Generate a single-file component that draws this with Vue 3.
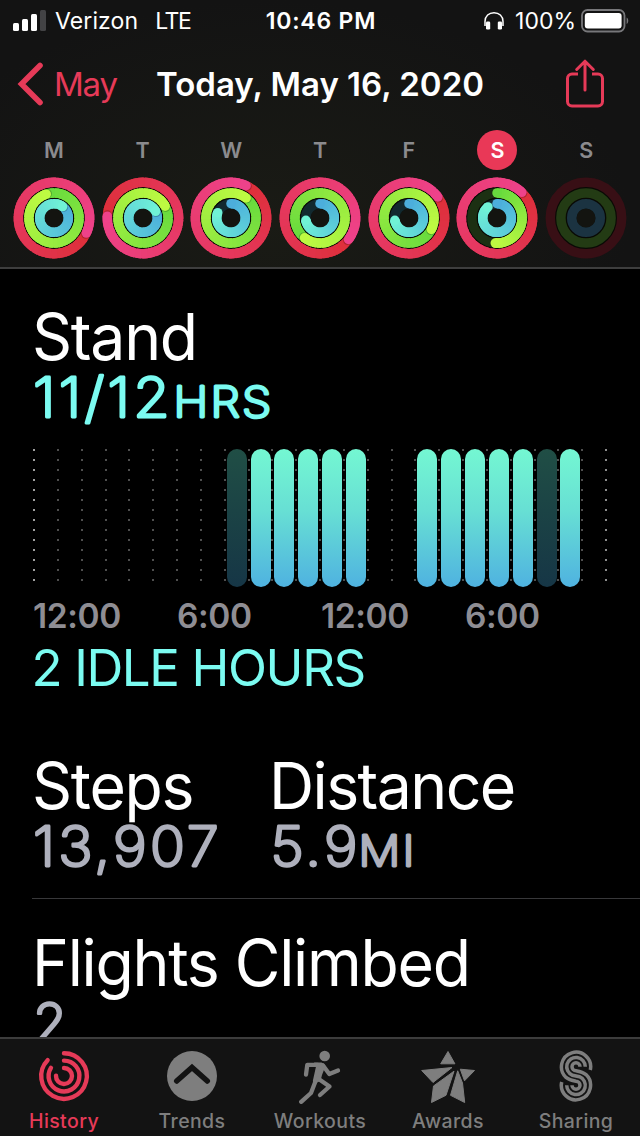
<template>
  <div class="screen">
    <header class="header">
      <div class="status">
        <div class="carrier">
          <div class="signal">
            <i v-for="n in 4" :key="n" :class="['bar', 'bar-' + n]"></i>
          </div>
          <span class="carrier-name">Verizon</span>
          <span class="network">LTE</span>
        </div>
        <div class="clock">10:46 PM</div>
        <div class="power">
          <svg class="headphones" width="22" height="20" viewBox="0 0 22 20">
            <path
              d="M2 15V10.500C2 5 6 1.700 11 1.700S20 5 20 10.500V15"
              fill="none"
              stroke="#fff"
              stroke-width="1.500"
            />
            <rect x="3" y="10.500" width="4.200" height="8" rx="1.300" fill="#fff" />
            <rect x="14.800" y="10.500" width="4.200" height="8" rx="1.300" fill="#fff" />
          </svg>
          <span class="percent">100%</span>
          <svg class="battery" width="48" height="24" viewBox="0 0 48 24">
            <rect x="1" y="1" width="42.500" height="21.500" rx="5.500" fill="none" stroke="#77777a" stroke-width="1.800" />
            <rect x="3.800" y="3.900" width="36.800" height="15.700" rx="3" fill="#fff" />
            <path d="M45.600 8.500c2.200 1 2.200 5.500 0 6.500z" fill="#77777a" />
          </svg>
        </div>
      </div>

      <div class="nav">
        <div class="back">
          <svg width="28" height="46" viewBox="0 0 28 46">
            <path
              d="M23 4.500L4.500 23L23 41.500"
              fill="none"
              stroke="#e63a58"
              stroke-width="5.600"
              stroke-linecap="round"
              stroke-linejoin="miter"
            />
          </svg>
          <span>May</span>
        </div>
        <h1>Today, May 16, 2020</h1>
        <svg class="share" width="40" height="50" viewBox="0 0 40 50">
          <g fill="none" stroke="#e63a58" stroke-width="3" stroke-linecap="round" stroke-linejoin="round">
            <path d="M13 15H7a4.500 4.500 0 0 0-4.500 4.500v23A4.500 4.500 0 0 0 7 47h26a4.500 4.500 0 0 0 4.500-4.500v-23A4.500 4.500 0 0 0 33 15h-6" stroke-linecap="butt" />
            <path d="M20 31V3M11.700 10.500L20 2.200l8.300 8.300" />
          </g>
        </svg>
      </div>

      <div class="week">
        <div v-for="(day, i) in days" :key="i" class="day">
          <span :class="['letter', { active: day.active }]">{{ day.letter }}</span>
          <svg class="rings" width="84" height="84" viewBox="-42 -42 84 84">
            <circle r="36" fill="#090a05" />
            <circle r="9.500" fill="#131410" />
            <g v-for="ring in day.rings" :key="ring.r">
              <circle :r="ring.r" fill="none" :stroke="ring.track" stroke-width="9.500" />
              <path
                v-for="(seg, s) in ring.segments"
                :key="s"
                :d="seg.d"
                fill="none"
                :stroke="seg.color"
                stroke-width="9.500"
              />
              <template v-if="ring.tip">
                <circle v-if="ring.start" :cx="ring.start.x" :cy="ring.start.y" r="4.750" :fill="ring.from" />
                <circle
                  v-if="!ring.start"
                  :cx="ring.shade.x"
                  :cy="ring.shade.y"
                  r="4.600"
                  fill="#000"
                  opacity="0.220"
                />
                <circle :cx="ring.tip.x" :cy="ring.tip.y" r="4.750" :fill="ring.to" />
              </template>
            </g>
          </svg>
        </div>
      </div>
    </header>

    <main class="content">
      <section class="stand">
        <h2>Stand</h2>
        <svg class="value cyan" width="260" height="60">
          <text x="0" y="47.500" textLength="140" lengthAdjust="spacingAndGlyphs" font-size="55">11/12</text>
          <text x="140.500" y="47.500" textLength="100" lengthAdjust="spacingAndGlyphs" font-size="42" class="unit">HRS</text>
        </svg>
        <div class="chart">
          <div v-for="(h, i) in hours" :key="i" class="hour">
            <div v-if="h" :class="['stand-bar', h]"></div>
          </div>
        </div>
        <div class="axis">
          <span v-for="(label, i) in axis" :key="i">{{ label }}</span>
        </div>
        <p class="idle">2 IDLE HOURS</p>
      </section>

      <section class="totals">
        <div class="steps">
          <h2>Steps</h2>
          <svg class="value" width="200" height="60">
            <text x="0" y="47.500" textLength="189" lengthAdjust="spacingAndGlyphs" font-size="55">13,907</text>
          </svg>
        </div>
        <div class="distance">
          <h2 class="tight">Distance</h2>
          <svg class="value" width="200" height="60">
            <text x="-1.500" y="47.500" textLength="90" lengthAdjust="spacingAndGlyphs" font-size="55">5.9</text>
            <text x="86.500" y="47.500" textLength="58" lengthAdjust="spacingAndGlyphs" font-size="42" class="unit">MI</text>
          </svg>
        </div>
      </section>

      <section class="flights">
        <h2>Flights Climbed</h2>
        <svg class="value" width="200" height="60">
          <text x="0" y="47.500" font-size="55">2</text>
        </svg>
      </section>
    </main>

    <nav class="tabs">
      <div class="tab selected">
        <svg width="56" height="56" viewBox="-28 -28 56 56">
          <path
            v-for="a in historyArcs"
            :key="a"
            :d="a"
            fill="none"
            stroke="currentColor"
            stroke-width="4.400"
            stroke-linecap="round"
          />
        </svg>
        <span>History</span>
      </div>
      <div class="tab">
        <svg width="56" height="56" viewBox="-28 -28 56 56">
          <circle r="25" fill="currentColor" />
          <path
            d="M-15.300 5L0 -8.500L15.300 5"
            fill="none"
            stroke="#131313"
            stroke-width="5.500"
            stroke-linecap="round"
          />
        </svg>
        <span>Trends</span>
      </div>
      <div class="tab">
        <svg width="48" height="56" viewBox="0 0 48 56">
          <circle cx="28.700" cy="8" r="5.300" fill="currentColor" />
          <path d="M18 14.600H25.500Q28.500 15.200 29.500 18L26 27L24.500 33L17.500 36L16.800 33L20 18.500z" fill="currentColor" />
          <g fill="none" stroke="currentColor" stroke-width="4.300" stroke-linecap="round" stroke-linejoin="round">
            <path d="M10 26.500L11.300 16.800H22" />
            <path d="M27 17.500L33.300 26L42 22.500" />
            <path d="M20 32L15 45L5.200 53.800" />
            <path d="M22 30.500L33.500 38.500L24 47" />
          </g>
        </svg>
        <span>Workouts</span>
      </div>
      <div class="tab">
        <svg width="54" height="56" viewBox="0 0 54 56">
          <g fill="currentColor" stroke="currentColor" stroke-width="1" stroke-linejoin="round">
            <path d="M27 3.500L19.700 15.800H33.900z" />
            <path d="M0.700 22.500L31 19.500L12 34.500z" />
            <path d="M39.300 21.200L53.500 22.500L43.500 32.800z" />
            <path d="M33 23.200L12.500 38L10.500 54.500L25 47.300z" />
            <path d="M36.700 22.800L41.500 35L43.700 54.500L29.500 47.300z" />
          </g>
        </svg>
        <span>Awards</span>
      </div>
      <div class="tab">
        <svg width="36" height="56" viewBox="0 -2 36 56">
          <g fill="none" stroke="currentColor" stroke-width="3.500">
            <path d="M32.300 20A14.600 14.600 0 1 0 8 27.400Q11 30 18 31.300A4 4 0 1 1 14 35.300" />
            <path d="M27.300 16.700A9.300 9.300 0 1 0 14.500 25.300L21.500 26.700A9.300 9.300 0 1 1 8.700 35.300" />
            <path d="M22 16.700A4 4 0 1 0 18 20.700Q25 22 28 24.600A14.600 14.600 0 1 1 3.700 32" />
          </g>
        </svg>
        <span>Sharing</span>
      </div>
    </nav>
  </div>
</template>

<script setup>
const MOVE = { r: 35.7, from: [222, 47, 58], to: [238, 66, 138], track: "#35101a" };
const EXERCISE = { r: 25.1, from: [104, 218, 62], to: [190, 250, 66], track: "#1c3013" };
const STAND = { r: 14.3, from: [76, 174, 220], to: [112, 242, 214], track: "#12292f" };

const point = (r, deg) => {
  const a = ((deg - 90) * Math.PI) / 180;
  return { x: +(r * Math.cos(a)).toFixed(3), y: +(r * Math.sin(a)).toFixed(3) };
};

const arc = (r, start, end) => {
  const p = point(r, start);
  const q = point(r, end);
  return `M${p.x} ${p.y}A${r} ${r} 0 ${end - start > 180 ? 1 : 0} 1 ${q.x} ${q.y}`;
};

const rgb = (c) => `rgb(${c.map(Math.round).join(",")})`;
const mix = (a, b, t) => rgb(a.map((v, i) => v + (b[i] - v) * t));

// angle is where the ring's tip stands; a full ring has passed its goal
const makeRing = (kind, angle, full) => {
  const start = full ? angle - 360 : 0;
  const count = 36;
  const step = (angle - start) / count;
  const segments = [];
  for (let i = 0; i < count; i++) {
    const a = start + i * step;
    segments.push({
      // each piece runs on under the next one so no seam shows
      d: arc(kind.r, a, a + step + (i < count - 1 ? 8 : 0)),
      color: mix(kind.from, kind.to, i / (count - 1)),
    });
  }
  return {
    r: kind.r,
    track: kind.track,
    segments,
    from: rgb(kind.from),
    to: rgb(kind.to),
    start: full ? null : point(kind.r, 0),
    tip: point(kind.r, angle),
    shade: point(kind.r, angle + 70 / kind.r),
  };
};

const makeDay = (letter, move, exercise, stand, more = {}) => ({
  letter,
  rings: [
    makeRing(MOVE, move, true),
    makeRing(EXERCISE, exercise, !more.openExercise),
    makeRing(STAND, stand, !more.openStand),
  ],
  ...more,
});

const days = [
  makeDay("M", 115, 342, 37),
  makeDay("T", 273, 62, 62),
  makeDay("W", 25, 37, 292, { openStand: true }),
  makeDay("T", 127, 218, 261, { openStand: true }),
  makeDay("F", 54, 117, 261, { openStand: true }),
  makeDay("S", 44, 184, 321, { openStand: true, openExercise: true, active: true }),
  {
    letter: "S",
    rings: [
      { r: 35.7, track: "#380f15" },
      { r: 25.1, track: "#233b14" },
      { r: 14.3, track: "#1b3341" },
    ],
  },
];

// one entry per hour from midnight: stood, idle or nothing
const hours = Array.from({ length: 24 }, (_, i) => {
  if (i === 8 || i === 21) return "idle-bar";
  if ((i > 8 && i < 14) || (i > 15 && i < 23)) return "stood";
  return "";
});

const axis = ["12:00", "6:00", "12:00", "6:00"];

const historyArcs = [arc(22.8, 0, 314), arc(15.4, 0, 302), arc(8, 0, 272)];
</script>

<style>
body {
  background: #000;
}
</style>

<style scoped>
.screen {
  width: 640px;
  height: 1136px;
  display: flex;
  flex-direction: column;
  overflow: hidden;
  background: #000;
  color: #fff;
  font-family: Inter, "Liberation Sans", sans-serif;
}
svg {
  display: block;
  flex: none;
}
h1,
h2,
p {
  margin: 0;
}

.header {
  flex: none;
  box-sizing: border-box;
  height: 269px;
  border-bottom: 2px solid #3e3e3e;
  background: radial-gradient(ellipse 360px 220px at 270px 220px, #1a1b15, #131313);
}
.status {
  display: grid;
  grid-template-columns: 1fr auto 1fr;
  align-items: center;
  height: 40px;
  padding: 0 11px 0 13px;
  font-size: 23px;
  line-height: 42px;
}
.carrier,
.power {
  display: flex;
  align-items: center;
}
.power {
  justify-content: flex-end;
}
.signal {
  display: flex;
  align-items: flex-end;
  gap: 3px;
  height: 21px;
  margin: 0 9px 2px 0;
}
.bar {
  width: 6px;
  border-radius: 1.5px;
  background: #fff;
}
.bar-1 {
  height: 8px;
}
.bar-2 {
  height: 12px;
}
.bar-3 {
  height: 17px;
}
.bar-4 {
  height: 21px;
  background: #434345;
}
.carrier-name {
  letter-spacing: 0.1px;
}
.network {
  margin-left: 17px;
  letter-spacing: -1.4px;
}
.clock {
  font-weight: 600;
  letter-spacing: 0.8px;
}
.headphones {
  margin-right: 10px;
}
.percent {
  letter-spacing: 0;
  margin-right: 5px;
}

.nav {
  display: grid;
  grid-template-columns: 1fr auto 1fr;
  align-items: center;
  height: 88px;
  padding: 0 35px;
  font-size: 33px;
  line-height: 40px;
}
.back {
  display: flex;
  align-items: center;
  gap: 9px;
  margin-left: -18px;
  letter-spacing: -1.2px;
  color: #e63a58;
}
.nav h1 {
  font-size: 33px;
  font-weight: 600;
}
.share {
  justify-self: end;
}

.week {
  display: grid;
  grid-template-columns: repeat(7, 1fr);
  padding: 2px 9.5px 0;
}
.day {
  display: flex;
  flex-direction: column;
  align-items: center;
}
.letter {
  width: 40px;
  height: 40px;
  border-radius: 50%;
  font-size: 21.5px;
  font-weight: 600;
  line-height: 41px;
  text-align: center;
  color: #8b8b8e;
}
.letter.active {
  background: #e93857;
  color: #fff;
}
.rings {
  margin-top: 6px;
}

.content {
  flex: 1;
  min-height: 0;
  overflow: hidden;
}
.stand {
  padding: 36px 33px 0;
}
h2 {
  margin-left: -1.5px;
  font-size: 64px;
  font-weight: 400;
  line-height: 64px;
  letter-spacing: -1.3px;
  white-space: nowrap;
  transform: scaleX(0.977);
  transform-origin: left;
}
h2.tight {
  margin-left: -3px;
  letter-spacing: -1.6px;
}
.value {
  overflow: visible;
}
/* thin glyphs with a round stroke give the soft terminals */
.value text {
  font-weight: 200;
  letter-spacing: 3px;
  fill: #aeb0bc;
  stroke: #aeb0bc;
  stroke-width: 2.9px;
  stroke-linejoin: round;
}
.value.cyan text {
  fill: #7bfbf1;
  stroke: #7bfbf1;
}
.value .unit {
  letter-spacing: 2px;
}

.chart {
  display: grid;
  grid-template-columns: repeat(24, 1fr);
  width: 572px;
  height: 138px;
  margin-top: 20px;
  padding-right: 2px;
  background: repeating-linear-gradient(#8c8c8c 0 2px, transparent 2px 10px) right 0 top 0 / 2px 132px no-repeat;
}
.hour {
  padding-left: 3px;
  background: repeating-linear-gradient(#4f4f4f 0 2px, transparent 2px 10px) 0 0 / 2px 132px no-repeat;
}
.hour:first-child {
  background-image: repeating-linear-gradient(#a0a0a0 0 2px, transparent 2px 10px);
}
.stand-bar {
  width: 20px;
  height: 138px;
  border-radius: 10px;
}
.stood {
  background: linear-gradient(#74f7d2, #67dfd4 45%, #4fb2e0);
}
.idle-bar {
  background: linear-gradient(#204e45, #1b4345 45%, #163646);
}
.axis {
  display: grid;
  grid-template-columns: repeat(4, 144px);
  margin-top: 9px;
  font-size: 33.5px;
  font-weight: 600;
  line-height: 40px;
  letter-spacing: -0.4px;
  color: #8e8d93;
}
.idle {
  margin: 2px 0 0 -1.5px;
  font-size: 51px;
  line-height: 60px;
  letter-spacing: -1.4px;
  color: #7bfbf1;
}
.totals {
  display: grid;
  grid-template-columns: 239px 1fr;
  margin: 56px 0 0 32px;
  padding: 0 0 20px 1px;
  border-bottom: 1px solid #38383a;
}
.flights {
  padding: 32px 33px 0;
}

.tabs {
  flex: none;
  box-sizing: border-box;
  display: grid;
  grid-template-columns: repeat(5, 128px);
  height: 99px;
  border-top: 2px solid #3c3c3c;
  background: #131313;
}
.tab {
  display: flex;
  flex-direction: column;
  align-items: center;
  padding-top: 9px;
  color: #7e7e7e;
  font-size: 19.5px;
  font-weight: 500;
  line-height: 24px;
  letter-spacing: 0.4px;
}
.tab span {
  margin-top: 5px;
}
.selected {
  color: #e63a58;
}
</style>
